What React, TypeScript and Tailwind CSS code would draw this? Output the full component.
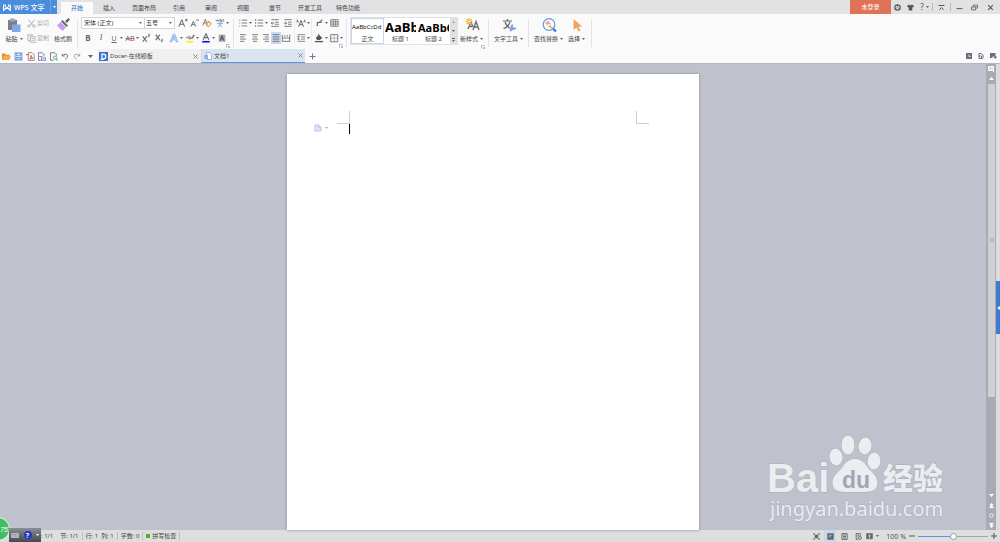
import { useState } from 'react';
import type { ReactNode } from 'react';
import clsx from 'clsx';

const MENU = ['开始', '插入', '页面布局', '引用', '审阅', '视图', '章节', '开发工具', '特色功能'];

type IconProps = { children: ReactNode; className?: string; box?: string };

// Line icon on a 12 x 12 grid
function Icon({ children, className = 'm-px size-[10px]', box = '0 0 12 12' }: IconProps) {
  return (
    <svg viewBox={box} className={clsx('shrink-0', className)} fill="none" stroke="currentColor" strokeWidth="1" aria-hidden="true">
      {children}
    </svg>
  );
}

function Caret({ className = 'text-[#666]' }: { className?: string }) {
  return (
    <svg viewBox="0 0 3 2" className={clsx('h-[2px] w-[3px] shrink-0', className)} aria-hidden="true">
      <path d="M0 0h3L1.5 2z" fill="currentColor" />
    </svg>
  );
}

type ToolProps = { label: string; caret?: boolean; className?: string; children: ReactNode };

function Tool({ label, caret, className, children }: ToolProps) {
  return (
    <button type="button" aria-label={label} className={clsx('flex h-3 shrink-0 items-center text-[#666]', className)}>
      {children}
      {caret && <Caret />}
    </button>
  );
}

function BigTool({ label, caret, className, children }: ToolProps) {
  return (
    <button type="button" className={clsx('flex shrink-0 flex-col items-center gap-[2px] whitespace-nowrap', className)}>
      {children}
      <span className="flex h-2 items-center gap-[2px]">
        {label}
        {caret && <Caret />}
      </span>
    </button>
  );
}

function Divider() {
  return <span className="mx-[3px] my-[2px] w-px shrink-0 self-stretch bg-[#e3e3e3]" />;
}

function Launcher() {
  return (
    <button type="button" aria-label="更多设置" className="absolute -bottom-1 right-0 text-[#9a9fb5]">
      <Icon className="size-1" box="0 0 4 4">
        <path d="M.5 3.5V.5h3M2 2l1.5 1.5M3.5 2v1.5H2" strokeWidth=".7" />
      </Icon>
    </button>
  );
}

function TitleBar() {
  const [active, setActive] = useState('开始');
  return (
    <header className="flex h-[14px] shrink-0 items-stretch bg-[#e2e2e4]">
      <button type="button" className="flex w-[50px] items-center gap-[3px] bg-[#4a8dda] pl-[3px] text-[7px] font-medium text-white">
        <Icon className="h-[7px] w-2" box="0 0 8 7">
          <path d="M.6.5v5.8L4 3.2l3.3 3.1V.5M2.4.5v2.2M5.6.5v2.2" strokeWidth="1.2" />
        </Icon>
        WPS 文字
      </button>
      <button type="button" aria-label="应用菜单" className="flex w-[7px] items-center justify-center border-l border-[#6aa1e2] bg-[#4a8dda]">
        <Caret className="text-white" />
      </button>
      <nav className="ml-1 flex items-stretch">
        {MENU.map((item) => (
          <button
            key={item}
            type="button"
            onClick={() => setActive(item)}
            className={clsx(
              'mt-[2px] flex items-center justify-center whitespace-nowrap',
              item.length > 2 ? 'w-[38px]' : 'w-8',
              item === active ? 'bg-[#fafafa] font-medium text-[#3a7bd0]' : 'text-[#444]'
            )}
          >
            {item}
          </button>
        ))}
      </nav>
      <div className="ml-auto flex items-center text-[#555]">
        <button type="button" className="flex w-[41px] items-center justify-center self-stretch bg-[#e07255] text-white">
          未登录
        </button>
        <button type="button" aria-label="皮肤" className="flex w-[13px] justify-center">
          <Icon className="size-[7px]">
            <circle cx="6" cy="6" r="4.6" strokeWidth="2" />
            <path d="M6 1v4M2 9l3-3M10 9L7 6" strokeWidth="1.4" />
          </Icon>
        </button>
        <button type="button" aria-label="换肤" className="flex w-[13px] justify-center">
          <Icon className="size-[7px]">
            <path d="M3.5 1L0 3.5l1.6 2.6L3 5.4V11h6V5.4l1.4.7L12 3.5 8.500 1C7.500 2.500 4.500 2.500 3.500 1z" fill="currentColor" stroke="none" />
          </Icon>
        </button>
        <button type="button" aria-label="帮助" className="flex w-[15px] items-center justify-center gap-[2px] text-[8px] leading-none">
          ?<Caret />
        </button>
        <span className="h-2 w-px bg-[#bbb]" />
        <button type="button" aria-label="隐藏功能区" className="flex w-[17px] justify-center">
          <Icon className="size-[7px]">
            <path d="M1 2.500h10M2.500 10L6 6l3.500 4" strokeWidth="1.700" />
          </Icon>
        </button>
        <span className="h-2 w-px bg-[#bbb]" />
        <button type="button" aria-label="最小化" className="flex w-[17px] justify-center">
          <Icon className="size-[7px]">
            <path d="M1 8h10" strokeWidth="1.700" />
          </Icon>
        </button>
        <button type="button" aria-label="还原" className="flex w-[13px] justify-center">
          <Icon className="size-[7px]">
            <path d="M4 4V2h7v5H9M1 5h7v5H1z" strokeWidth="1.400" />
          </Icon>
        </button>
        <button type="button" aria-label="关闭" className="flex w-[19px] justify-center">
          <Icon className="size-[7px]">
            <path d="M2 2l8 8M10 2l-8 8" strokeWidth="1.900" />
          </Icon>
        </button>
      </div>
    </header>
  );
}

function ClipboardGroup() {
  return (
    <div className="flex items-start gap-1 pl-[5px] pr-px">
      <BigTool label="粘贴" caret className="w-[18px]">
        <Icon className="size-4" box="0 0 16 16">
          <path d="M2 3h9v10H2z" fill="#7b7f88" stroke="none" />
          <path d="M4 1.500h5v3H4z" fill="#a5a9b0" stroke="none" />
          <path d="M6 7.500h8.500V15H6z" fill="#7fa9ea" stroke="none" />
        </Icon>
      </BigTool>
      <div className="flex flex-col gap-[3px] text-[#aaa]">
        <button type="button" className="flex h-3 items-center gap-px">
          <Icon className="size-[9px]">
            <path d="M2 1l6 8M10 1L4 9" strokeWidth="1.300" />
            <circle cx="2.500" cy="9.500" r="1.700" />
            <circle cx="9.500" cy="9.500" r="1.700" />
          </Icon>
          剪切
        </button>
        <button type="button" className="flex h-3 items-center gap-px">
          <Icon className="size-[9px]">
            <path d="M1 1h6v8H1z" fill="#eee" />
            <path d="M4.500 3.500H11v8H4.500zM6 6h3.500M6 8.500h3.500" fill="#f5f5f5" />
          </Icon>
          复制
        </button>
      </div>
      <BigTool label="格式刷" className="w-5">
        <Icon className="size-4" box="0 0 16 16">
          <path d="M10 4l3.500-3 1.500 1.500L12 6z" fill="#666" stroke="none" />
          <path d="M7.500 3l5.500 5.500-1.500 1.500L6 4.500z" fill="#6b6570" stroke="none" />
          <path d="M5.500 5L11 10.500 7.500 14 2 8.500z" fill="#c79bef" stroke="none" />
        </Icon>
      </BigTool>
    </div>
  );
}

function FontGroup() {
  return (
    <div className="relative flex w-[149px] flex-col gap-[3px]">
      <div className="flex h-3 items-center">
        <label className="flex h-3 w-16 items-center border border-[#d5d5d5] bg-white pr-[2px]">
          <select aria-label="字体" className="min-w-0 flex-1 appearance-none pl-[2px] text-[#333] outline-none">
            <option>宋体 (正文)</option>
          </select>
          <Caret />
        </label>
        <label className="flex h-3 w-[30px] items-center border border-l-0 border-[#d5d5d5] bg-white pr-[2px]">
          <select aria-label="字号" className="min-w-0 flex-1 appearance-none pl-px text-[#333] outline-none">
            <option>五号</option>
          </select>
          <Caret />
        </label>
        <Tool label="增大字号" className="ml-[2px]">
          <Icon>
            <path d="M1 10.500L4.500 2 8 10.500M2.300 7.500h4.500M8.500 2.500h3M10 1v3" strokeWidth="1.200" />
          </Icon>
        </Tool>
        <Tool label="减小字号">
          <Icon>
            <path d="M1 10.500L4 4l3 6.500M2.200 8h3.600M7.500 2.500h3" strokeWidth="1.100" />
          </Icon>
        </Tool>
        <Tool label="清除格式">
          <Icon>
            <path d="M1 9L4 1.500 6.500 8M2.200 6h3" />
            <path d="M8 4l3 3-3.500 3.500-2.500-2.500z" stroke="#e8a25c" strokeWidth="1.300" />
          </Icon>
        </Tool>
        <Tool label="拼音指南" caret className="ml-px">
          <Icon>
            <path d="M1 2l1 2 1-2 1 2 1-2M6 1v3.500h2V2.500H6M11 2H9.500v2H11" strokeWidth=".8" />
            <path d="M2.500 6.500h7M6 5.500v1M4 7l4.500 4M8 7l-4.500 4" stroke="#6f9fe6" />
          </Icon>
        </Tool>
      </div>
      <div className="flex h-3 items-center gap-px pl-px">
        <Tool label="加粗" className="w-3 justify-center text-[8px] font-bold">B</Tool>
        <Tool label="倾斜" className="w-3 justify-center font-['Liberation_Serif',serif] text-[8px] italic">I</Tool>
        <Tool label="下划线" caret>
          <span className="w-3 text-center text-[7px] underline">U</span>
        </Tool>
        <Tool label="删除线" caret>
          <span className="w-3 text-center text-[7px] line-through decoration-[#c66]">AB</span>
        </Tool>
        <Tool label="上标">
          <Icon>
            <path d="M2 4l5 6.500M7 4l-5 6.500" strokeWidth="1.300" />
            <path d="M8.500 1.500h2v1.500h-2v1.500h2" strokeWidth=".8" />
          </Icon>
        </Tool>
        <Tool label="下标">
          <Icon>
            <path d="M2 2l5 6.500M7 2l-5 6.500" strokeWidth="1.300" />
            <path d="M8.500 7.500h2v1.500h-2v1.500h2" strokeWidth=".8" />
          </Icon>
        </Tool>
        <Tool label="文字效果" caret className="ml-[2px]">
          <Icon>
            <path d="M1.500 10.500L5 1.500h2l3.500 9H8.700l-.8-2.300H4.100l-.8 2.300zM6 3.500L4.700 6.700h2.600z" stroke="#6f9fe6" strokeWidth=".9" fill="#dfeafb" />
          </Icon>
        </Tool>
        <Tool label="突出显示" caret>
          <Icon>
            <path d="M1 6l1.500-1.500L4 7M5 3v4h2V5H5" strokeWidth=".9" />
            <path d="M7.500 6.500L10.500 2l1 1-3 4z" fill="currentColor" strokeWidth=".5" />
            <path d="M1 10.500h9" stroke="#fff000" strokeWidth="2" />
          </Icon>
        </Tool>
        <Tool label="字体颜色" caret>
          <Icon>
            <path d="M2.500 8L6 1l3.500 7M3.800 5.500h4.400" strokeWidth="1.300" />
            <path d="M1.500 10.500h9" stroke="#1414e6" strokeWidth="2" />
          </Icon>
        </Tool>
        <Tool label="字符底纹">
          <Icon>
            <path d="M2 2h8v8.500H2z" fill="#a8abb3" stroke="none" />
            <path d="M3.500 9.500L6 3l2.500 6.500M4.500 7h3" stroke="#444" />
          </Icon>
        </Tool>
      </div>
      <Launcher />
    </div>
  );
}

function ParagraphGroup() {
  return (
    <div className="relative flex w-[106px]">
      <div className="flex flex-col gap-[3px]">
        <div className="flex h-3 items-center gap-px">
          <Tool label="项目符号" caret>
            <Icon>
              <path d="M4.500 2.500H11M4.500 6H11M4.500 9.500H11M1.500 2.500h1.200M1.500 6h1.200M1.500 9.500h1.200" />
            </Icon>
          </Tool>
          <Tool label="编号" caret>
            <Icon>
              <path d="M4.500 2.500H11M4.500 6H11M4.500 9.500H11M2 1.200v2.300M2 4.900v2.200M2 8.500v2.300" />
            </Icon>
          </Tool>
          <Tool label="减少缩进">
            <Icon>
              <path d="M1.500 2h9M6 5h4.500M6 7.500h4.500M1.500 10h9M5 6.200H1.500M3.200 4.500L1.500 6.200l1.700 1.700" />
            </Icon>
          </Tool>
          <Tool label="增加缩进">
            <Icon>
              <path d="M1.500 2h9M6 5h4.500M6 7.500h4.500M1.500 10h9M1 6.200h3.500M2.800 4.500l1.700 1.700-1.700 1.700" />
            </Icon>
          </Tool>
        </div>
        <div className="flex h-3 items-center">
          <Tool label="左对齐">
            <Icon><path d="M2.500 2h7M2.500 4.700h5M2.500 7.300h7M2.500 10h5" /></Icon>
          </Tool>
          <Tool label="居中">
            <Icon><path d="M2.500 2h7M3.500 4.700h5M2.500 7.300h7M3.500 10h5" /></Icon>
          </Tool>
          <Tool label="右对齐">
            <Icon className="size-[10px]"><path d="M2.500 2h7M4.500 4.700h5M2.500 7.300h7M4.500 10h5" /></Icon>
          </Tool>
          <Tool label="两端对齐" className="bg-[#c6d9f3]">
            <Icon className="size-[10px]"><path d="M2 2h8M2 4.700h8M2 7.300h8M2 10h8" /></Icon>
          </Tool>
          <Tool label="分散对齐">
            <Icon className="size-[10px]"><path d="M1.500 2v8.500M10.500 2v8.500M1.500 6h9M1.500 10h9M4.500 2.500v2M7.500 2.500v2" /></Icon>
          </Tool>
        </div>
      </div>
      <span className="my-px w-px self-stretch bg-[#ececec]" />
      <div className="flex flex-col gap-[3px]">
        <Tool label="中文版式" caret>
          <Icon>
            <path d="M3 10.500L6 3l3 7.500M4 8h4M1 2l1.500 2M11 2L9.500 4M.5 4.500H3M9 4.500h2.500" strokeWidth="1.200" />
          </Icon>
        </Tool>
        <Tool label="行距" caret>
          <Icon>
            <path d="M2 2h9M6 4.700h5M6 7.300h5M2 10h9M3 3.500v5M1.500 5L3 3.500 4.500 5M1.500 7L3 8.500 4.500 7" strokeWidth=".9" />
          </Icon>
        </Tool>
      </div>
      <span className="mx-px my-px w-px self-stretch bg-[#ececec]" />
      <div className="flex flex-col gap-[3px]">
        <div className="flex h-3 items-center">
          <Tool label="段落布局" caret>
            <Icon><path d="M3 9h2M4 9V5.500h2L10 2M7 5h2.500" strokeWidth="1.300" /></Icon>
          </Tool>
          <Tool label="表格">
            <Icon><path d="M2 2h9v8H2zM2 4.700h9M2 7.300h9M5 2v8M8 2v8" strokeWidth=".9" /></Icon>
          </Tool>
        </div>
        <div className="flex h-3 items-center">
          <Tool label="底纹颜色" caret>
            <Icon>
              <path d="M2 6l4-4 4 4-3 2.500H4z" fill="#555" stroke="none" />
              <path d="M5.500 1v3" />
              <path d="M1 10.300h10" stroke="#555" strokeWidth="1.600" />
            </Icon>
          </Tool>
          <Tool label="边框" caret>
            <Icon>
              <path d="M2 2h8.500v8.500H2z" />
              <path d="M6.200 2v8.500M2 6.200h8.500" strokeWidth=".5" />
            </Icon>
          </Tool>
        </div>
      </div>
      <Launcher />
    </div>
  );
}

const STYLES = [
  { name: '正文', sample: 'AaBbCcDd', text: 'text-[6px]' },
  { name: '标题 1', sample: 'AaBb', text: 'text-[13px] font-bold' },
  { name: '标题 2', sample: 'AaBbC', text: 'text-[11px] font-bold' },
];

function StyleGroup() {
  const [style, setStyle] = useState('正文');
  return (
    <div className="relative flex items-start gap-[2px] pr-[2px]">
      <div className="flex h-7 border border-[#e2e2e2] bg-white">
        {STYLES.map((s) => (
          <button
            key={s.name}
            type="button"
            onClick={() => setStyle(s.name)}
            className={clsx('flex w-[33px] flex-col border', s.name === style ? 'border-[#c3d6f2]' : 'border-transparent')}
          >
            <span className={clsx("flex h-4 w-full items-center overflow-hidden whitespace-nowrap font-['Open_Sans',sans-serif] leading-none text-black", s.text)}>
              {s.sample}
            </span>
            <span className="w-full text-center leading-[8px]">{s.name}</span>
          </button>
        ))}
        <div className="flex w-[7px] flex-col bg-[#e0e0e2]">
          <button type="button" aria-label="上一行" className="flex flex-1 items-center justify-center"><Caret className="rotate-180 text-[#aaa]" /></button>
          <button type="button" aria-label="下一行" className="flex flex-1 items-center justify-center"><Caret /></button>
          <button type="button" aria-label="更多样式" className="flex flex-1 flex-col items-center justify-center gap-px">
            <span className="h-px w-[3px] bg-[#666]" />
            <Caret />
          </button>
        </div>
      </div>
      <BigTool label="新样式" caret>
        <Icon className="size-4" box="0 0 16 16">
          <path d="M4 12l3-7 2 5M9 13l3-8.500 3 8.500M10 10h4M5 9.500h3" stroke="#6d6d72" strokeWidth="1.400" />
          <path d="M5 1v7M1.500 4.500h7M2.500 2l5 5M7.500 2l-5 5" stroke="#f3b63f" strokeWidth="1.200" />
          <circle cx="5" cy="4.500" r="1.500" fill="#fff3c9" stroke="#f3b63f" />
        </Icon>
      </BigTool>
      <Launcher />
    </div>
  );
}

function Ribbon() {
  return (
    <div className="flex h-[35px] shrink-0 items-start bg-[#fafafa] pt-[3px] text-[#444]">
      <ClipboardGroup />
      <Divider />
      <FontGroup />
      <Divider />
      <ParagraphGroup />
      <Divider />
      <StyleGroup />
      <Divider />
      <BigTool label="文字工具" caret className="mx-[2px]">
        <Icon className="size-4" box="0 0 16 16">
          <path d="M2 4h9M6.500 2v2M4 5c1 3 3 5.500 6 6.500M9 5c-1 3-3 5.500-6.500 6.500" stroke="#666" strokeWidth="1.200" />
          <path d="M9 14l3.500-3.500M12 8a2 2 0 1 0 2.500 2.500" stroke="#7f9fe0" strokeWidth="1.900" />
        </Icon>
      </BigTool>
      <Divider />
      <BigTool label="查找替换" caret className="mx-[2px]">
        <Icon className="size-4" box="0 0 16 16">
          <circle cx="8" cy="7.500" r="5.800" stroke="#5f9be8" strokeWidth="1.200" />
          <path d="M12 11.500l3 3" stroke="#2f7be0" strokeWidth="2.200" />
          <path d="M5 7V5h2v2zM7.500 4v3H9V5.500M7 9.500h2M9.500 8v3H11V9.500" stroke="#e59a62" strokeWidth=".9" />
        </Icon>
      </BigTool>
      <BigTool label="选择" caret className="mx-[3px]">
        <Icon className="size-4" box="0 0 16 16">
          <path d="M4.500 2v11l3-2.500 2 4 2-1-2-3.700 3.500-.3z" fill="#f0a35e" stroke="none" />
        </Icon>
      </BigTool>
      <Divider />
    </div>
  );
}

function QuickAccess() {
  return (
    <div className="flex w-[98px] shrink-0 items-center pl-[1px]">
      <Tool label="打开" className="w-[11px] justify-center">
        <Icon className="size-[9px]">
          <path d="M0 2h4l1 1.500h5V10H0z" fill="#f08a24" stroke="none" />
          <path d="M2.500 5H12l-2 5.500H0z" fill="#f9a94d" stroke="none" />
        </Icon>
      </Tool>
      <Tool label="保存" className="w-3 justify-center">
        <Icon className="size-[9px]">
          <path d="M1.500 1.500h9v9h-9zM3.500 1.500v3.500h5V1.500M3.500 10.500V7.500h5v3" stroke="#6b97e0" strokeWidth="1.400" />
        </Icon>
      </Tool>
      <Tool label="输出为PDF" className="w-3 justify-center">
        <Icon className="size-[9px]">
          <path d="M3 .8h5l3 3v7.500H3z" stroke="#777" />
          <path d="M5 9.500c2-2 2-4 1.500-5 0 2 1.500 3.500 3 3.500-2 0-3.500.7-4.500 1.500zM0 3.500h4" stroke="#e03c31" strokeWidth="1.200" />
        </Icon>
      </Tool>
      <Tool label="打印" className="w-[11px] justify-center">
        <Icon className="size-[9px]">
          <path d="M9 6V3L7 1H2v10h3" stroke="#777" strokeWidth="1.200" />
          <path d="M3 6h4M6 8h5.500v3H6z" stroke="#7c83d8" strokeWidth="1.400" />
        </Icon>
      </Tool>
      <Tool label="打印预览" className="w-3 justify-center">
        <Icon className="size-[9px]">
          <path d="M10 5V3L8 1H2v10h4" stroke="#777" strokeWidth="1.200" />
          <circle cx="8" cy="7.500" r="2.200" stroke="#5faf6b" strokeWidth="1.200" />
          <path d="M9.500 9l2 2.500" stroke="#5faf6b" strokeWidth="1.500" />
        </Icon>
      </Tool>
      <Tool label="撤销" className="w-3 justify-center">
        <Icon className="size-2">
          <path d="M2 2.500V6h3.500M2.200 6C4 3 8 2.500 9.500 4.500S9 9.500 6 11" strokeWidth="1.300" />
        </Icon>
      </Tool>
      <Tool label="恢复" className="w-3 justify-center">
        <Icon className="size-2">
          <path d="M10 2.500V6H6.500M9.800 6C8 3 4 2.500 2.500 4.500S3 9.500 6 11" stroke="#999" strokeWidth="1.300" />
        </Icon>
      </Tool>
      <button type="button" aria-label="自定义快速访问工具栏" className="flex flex-1 items-center justify-center text-[#666]">
        <svg viewBox="0 0 5 3" className="h-[3px] w-[5px]" aria-hidden="true">
          <path d="M0 0h5L2.500 3z" fill="currentColor" />
        </svg>
      </button>
    </div>
  );
}

function CloseMark() {
  return (
    <Icon className="size-[5px] text-[#777]" box="0 0 5 5">
      <path d="M.5.5l4 4M4.500.5l-4 4" strokeWidth=".8" />
    </Icon>
  );
}

function DocumentTabs() {
  return (
    <div className="flex h-[15px] shrink-0 items-stretch border-b border-[#b3b7c2] bg-[#fafafa] text-[#444]">
      <QuickAccess />
      <div className="flex w-[103px] items-center gap-[2px] bg-[#f0f0f1] px-px">
        <Icon className="size-[9px]" box="0 0 9 9">
          <rect width="9" height="9" fill="#3b72c8" stroke="none" />
          <path d="M3 2.200h1.500a2.200 2.200 0 0 1 0 4.600H3zM1.500 7.500h3" stroke="#fff" strokeWidth="1.200" />
        </Icon>
        <a href="#docer" className="flex-1 whitespace-nowrap">Docer-在线模板</a>
        <button type="button" aria-label="关闭 Docer" className="pr-[2px]"><CloseMark /></button>
      </div>
      <div className="flex w-[104px] items-center gap-[2px] border-b border-l border-b-[#5b95e3] border-l-[#d5dbe6] bg-[#dae4f1] px-[2px]">
        <Icon className="size-2">
          <path d="M4 .8h4.500l2.700 3v7.500H4z" fill="#fff" stroke="#6b97e0" />
          <path d="M.5 5h5.500v5H.5z" fill="#5b95e3" stroke="none" />
          <path d="M1.500 6.500l.8 2 1-1.500 1 1.500.8-2" stroke="#fff" strokeWidth=".8" />
        </Icon>
        <a href="#doc1" className="flex-1 whitespace-nowrap">文档1</a>
        <button type="button" aria-label="关闭 文档1"><CloseMark /></button>
      </div>
      <button type="button" aria-label="新建文档" className="flex w-[15px] items-center justify-center text-[#777]">
        <Icon className="size-[7px]" box="0 0 7 7">
          <path d="M3.500.5v6M.5 3.500h6" strokeWidth="1" />
        </Icon>
      </button>
      <div className="ml-auto flex items-center gap-[6px] pr-[3px] text-[#6a6f80]">
        <button type="button" aria-label="任务窗格">
          <Icon className="size-[6px]" box="0 0 6 6">
            <path d="M0 0h6v6H0z" fill="currentColor" stroke="none" />
            <path d="M3 1.500v2h1.500" stroke="#fff" strokeWidth=".8" />
          </Icon>
        </button>
        <button type="button" aria-label="在线文档">
          <Icon className="size-[6px]" box="0 0 6 6">
            <path d="M1 .5h2.500l2 2.500-1 2.500H1zM1 3h2.500v2" />
          </Icon>
        </button>
        <button type="button" aria-label="反馈">
          <Icon className="h-[6px] w-[7px]" box="0 0 7 6">
            <path d="M0 0h5.500v3.500H2.500v1.500H0z" fill="currentColor" stroke="none" />
            <path d="M3.500 3.500h3.500L5.300 6z" fill="#555" stroke="none" />
          </Icon>
        </button>
      </div>
    </div>
  );
}

function Page() {
  return (
    <main className="mt-[10px] flex w-[412px] max-w-full flex-col bg-white pt-[37px] shadow-[0_0_3px_#8b8f9c]">
      <div className="flex justify-between px-[50px]">
        <span className="h-[13px] w-[13px] border-b border-r border-[#cfcfcf]" />
        <span className="h-[13px] w-[13px] border-b border-l border-[#cfcfcf]" />
      </div>
      <div className="flex flex-1 items-start">
        <button type="button" aria-label="粘贴选项" className="flex w-[62px] shrink-0 items-center gap-[3px] pl-[27px] text-[#999]">
          <Icon className="size-2">
            <path d="M1.500 1.500h5.500l3.500 3.500v5.500h-9z" fill="#dbe6f6" stroke="#a9c1e6" strokeWidth="1.300" />
            <path d="M6.500 1.500V5.500h4" stroke="#a9c1e6" strokeWidth="1.200" />
          </Icon>
          <Caret className="text-[#aaa]" />
        </button>
        <span className="h-[10px] w-px shrink-0 bg-black" />
        <textarea aria-label="正文内容" className="mr-[62px] min-w-0 flex-1 resize-none self-stretch text-[8px] outline-none" />
      </div>
    </main>
  );
}

function Watermark() {
  return (
    <div className="pointer-events-none absolute bottom-[8px] right-[50px]">
      <svg viewBox="0 0 186 90" className="h-[90px] w-[186px]" fill="#ecedf1" stroke="#a9adb8" strokeWidth="1" paintOrder="stroke" aria-hidden="true">
        <ellipse cx="72" cy="25" rx="6.500" ry="8.500" transform="rotate(-8 72 25)" />
        <ellipse cx="84" cy="13" rx="6.500" ry="9.500" />
        <ellipse cx="101" cy="14" rx="6.500" ry="8.500" transform="rotate(8 101 14)" />
        <ellipse cx="110" cy="29" rx="6.500" ry="8.500" transform="rotate(4 110 29)" />
        <path d="M91 27c-9 0-11 7-15 11-5 5-9 9-7 16 2 7 11 6 22 6s20 1 22-6c2-7-2-11-7-16-4-4-6-11-15-11z" />
        <g fontFamily="'Liberation Sans', sans-serif" fontWeight="bold">
          <text x="3" y="60" fontSize="40">Bai</text>
          <text x="78" y="56" fontSize="23" fill="#a3a7b3" stroke="none">du</text>
        </g>
        <text x="119" y="57" fontSize="30" fontWeight="900" fontFamily="'Noto Sans CJK SC', sans-serif">经验</text>
        <text x="6" y="84" fontSize="20" fontFamily="'Noto Sans', sans-serif">jingyan.baidu.com</text>
      </svg>
    </div>
  );
}

function ScrollBar() {
  return (
    <div className="flex w-[10px] shrink-0 flex-col items-center bg-[#a9aab4] text-white">
      <button type="button" aria-label="标尺" className="mt-px flex h-2 items-center">
        <Icon className="size-[6px]" box="0 0 6 6">
          <path d="M.5.5h5v4h-5z" fill="#ddd" />
          <path d="M3 3l3 3" />
        </Icon>
      </button>
      <button type="button" aria-label="向上滚动" className="flex h-[11px] items-center">
        <svg viewBox="0 0 5 3" className="h-[3px] w-[5px]" aria-hidden="true"><path d="M0 3h5L2.500 0z" fill="currentColor" /></svg>
      </button>
      <div className="flex w-full flex-1 flex-col pl-[2px] pr-px">
        <div className="flex h-[77%] items-center justify-center bg-[#d0d0d4] text-[#aaa]">
          <Icon className="size-1" box="0 0 4 4">
            <path d="M0 .5h4M0 2h4M0 3.500h4" strokeWidth=".8" />
          </Icon>
        </div>
      </div>
      <div className="flex flex-col items-center">
        <button type="button" aria-label="向下滚动" className="flex h-[10px] items-center">
          <svg viewBox="0 0 5 3" className="h-[3px] w-[5px]" aria-hidden="true"><path d="M0 0h5L2.500 3z" fill="currentColor" /></svg>
        </button>
        <button type="button" aria-label="上一页" className="flex h-[10px] items-center">
          <svg viewBox="0 0 5 5" className="size-[5px]" aria-hidden="true"><path d="M0 2.500h5L2.500 0zM0 5h5L2.500 2z" fill="currentColor" /></svg>
        </button>
        <button type="button" aria-label="选择浏览对象" className="flex h-[10px] items-center">
          <Icon className="size-[5px]" box="0 0 5 5"><circle cx="2.500" cy="2.500" r="1.800" strokeWidth=".8" /></Icon>
        </button>
        <button type="button" aria-label="下一页" className="flex h-[10px] items-center">
          <svg viewBox="0 0 5 5" className="size-[5px]" aria-hidden="true"><path d="M0 0h5L2.500 3zM0 2.500h5L2.500 5z" fill="currentColor" /></svg>
        </button>
      </div>
    </div>
  );
}

function FloatingBall() {
  return (
    <div className="absolute bottom-0 left-0 flex items-end overflow-hidden">
      <div className="-ml-[14px] mb-px flex size-6 items-center justify-end rounded-full border border-[#e8f6ea] bg-[#43bd62] pr-px font-['Liberation_Sans',sans-serif] text-[7px] italic text-white">
        75
      </div>
      <div className="-ml-px flex h-[14px] w-8 items-center justify-between bg-gradient-to-b from-[#8b8e94] to-[#454950] px-[2px] text-white">
        <Icon className="h-[5px] w-2" box="0 0 8 5">
          <rect width="8" height="5" rx="1" fill="#b9bbc0" stroke="none" />
          <path d="M1 1.500h6M1 3h6" stroke="#666" strokeWidth=".5" strokeDasharray="1 .5" />
        </Icon>
        <span className="flex size-2 items-center justify-center rounded-full bg-[#2436c4] text-[7px] font-bold leading-none">?</span>
        <Caret className="text-white" />
      </div>
    </div>
  );
}

function StatusDivider() {
  return <span className="h-2 w-px bg-[#bdbdc0]" />;
}

function StatusBar() {
  const [zoom, setZoom] = useState(100);
  return (
    <footer className="flex h-3 shrink-0 items-center justify-between bg-[#dededf] text-[#444]">
      <div className="flex items-center gap-[3px] whitespace-nowrap pl-[41px]">
        <span>: 1/1</span>
        <span className="pl-1">节: 1/1</span>
        <StatusDivider />
        <span>行: 1</span>
        <span>列: 1</span>
        <StatusDivider />
        <span>字数: 0</span>
        <StatusDivider />
        <button type="button" className="flex items-center gap-[2px]">
          <span className="size-1 bg-[#4fae2d]" />
          拼写检查
        </button>
        <StatusDivider />
      </div>
      <div className="flex items-center gap-[2px] pr-[2px] text-[#555]">
        <Tool label="全屏显示" className="w-3 justify-center">
          <Icon className="size-[7px]">
            <path d="M3.500 3.500h5v5h-5z" fill="currentColor" />
            <path d="M1 3.500V1h2.500M8.500 1H11v2.500M11 8.500V11H8.500M3.500 11H1V8.500M1 1l10 10M11 1L1 11" />
          </Icon>
        </Tool>
        <Tool label="页面视图" className="w-3 justify-center bg-[#c6d9f3]">
          <Icon className="size-[7px]">
            <path d="M1 1h10v10H1z" fill="currentColor" />
            <path d="M3 4h6M3 6.500h4" stroke="#ddd" />
          </Icon>
        </Tool>
        <Tool label="大纲视图" className="w-3 justify-center">
          <Icon className="size-[7px]">
            <path d="M1.500 1h9v10h-9zM3.500 3.500h5M3.500 6h5M3.500 8.500h5" strokeWidth="1.600" />
          </Icon>
        </Tool>
        <Tool label="Web版式" className="w-3 justify-center">
          <Icon className="size-[7px]">
            <path d="M9 5V1H2v10h3M4 4h3M4 7h2" strokeWidth="1.600" />
            <circle cx="8.500" cy="8.500" r="2.500" strokeWidth="1.500" />
          </Icon>
        </Tool>
        <Tool label="阅读版式" caret className="w-3 gap-[3px]">
          <Icon className="size-[7px]">
            <path d="M1 1h10v9H1z" fill="currentColor" />
            <path d="M6 2.500v7M4 5h4" stroke="#ddd" strokeWidth="1.300" />
          </Icon>
        </Tool>
        <span className="ml-[6px] whitespace-nowrap text-[7px]">{zoom} %</span>
        <button type="button" aria-label="缩小" className="flex w-2 justify-center">
          <Icon className="size-[6px]" box="0 0 6 6"><path d="M0 3h6" /></Icon>
        </button>
        <input
          type="range"
          aria-label="显示比例"
          min={0}
          max={200}
          value={zoom}
          onChange={(e) => setZoom(Number(e.target.value))}
          className="h-2 w-[70px] appearance-none bg-[linear-gradient(to_right,#5b95e3_50%,#a5a5a8_50%)] bg-[length:100%_1px] bg-center bg-no-repeat [&::-webkit-slider-thumb]:size-[7px] [&::-webkit-slider-thumb]:appearance-none [&::-webkit-slider-thumb]:rounded-full [&::-webkit-slider-thumb]:border [&::-webkit-slider-thumb]:border-[#999] [&::-webkit-slider-thumb]:bg-white"
        />
        <button type="button" aria-label="放大" className="flex w-2 justify-center">
          <Icon className="size-[6px]" box="0 0 6 6"><path d="M0 3h6M3 0v6" /></Icon>
        </button>
      </div>
    </footer>
  );
}

export default function App() {
  return (
    <div className="relative flex h-screen flex-col overflow-hidden bg-[#fafafa] font-['Noto_Sans','Noto_Sans_CJK_SC',sans-serif] text-[6px] leading-none">
      <TitleBar />
      <Ribbon />
      <DocumentTabs />
      <div className="relative flex min-h-0 flex-1 bg-[#bfc2cc]">
        <div className="flex flex-1 justify-center">
          <Page />
        </div>
        <ScrollBar />
        <div className="flex w-1 shrink-0 flex-col bg-[#dcdcde]">
          <div className="flex-[217]" />
          <button type="button" aria-label="展开任务窗格" className="flex flex-[53] items-center justify-center bg-[#3d7bd0] text-white">
            <svg viewBox="0 0 3 4" className="h-1 w-[3px]" aria-hidden="true"><path d="M3 0v4L0 2z" fill="currentColor" /></svg>
          </button>
          <div className="flex-[196]" />
        </div>
        <Watermark />
      </div>
      <StatusBar />
      <FloatingBall />
    </div>
  );
}
